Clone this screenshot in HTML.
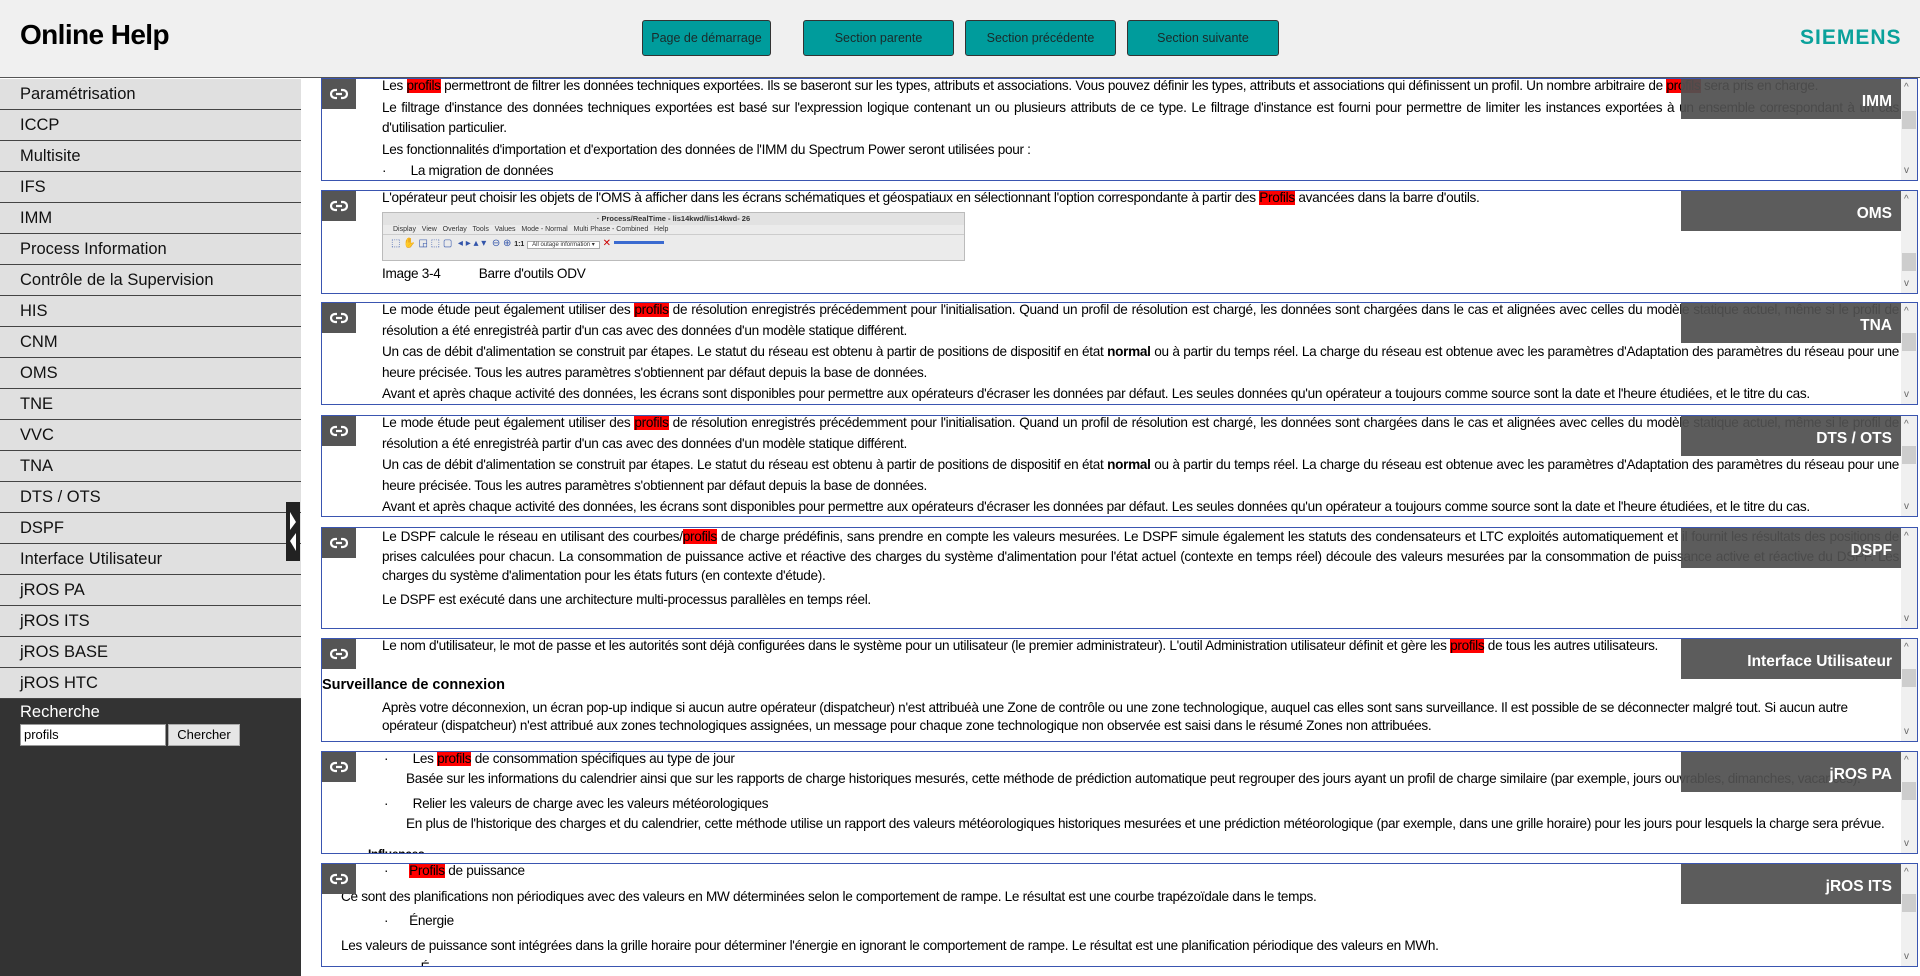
<!DOCTYPE html>
<html><head><meta charset="utf-8"><style>
*{box-sizing:border-box;margin:0;padding:0}
body{width:1920px;height:976px;overflow:hidden;background:#fff;font-family:"Liberation Sans",Arial,sans-serif;position:relative;color:#000}
#hdr{position:absolute;left:0;top:0;width:1920px;height:78px;background:#f0f0f0;border-bottom:1px solid #555}
#hdr h1{position:absolute;left:20px;top:19px;font-size:28px;font-weight:bold;letter-spacing:-0.6px}
.btn{position:absolute;top:20px;height:36px;background:#009c9c;border:1px solid #333;border-radius:3px;color:#1a2a2a;font-size:12.5px;text-align:center;line-height:34px}
#logo{position:absolute;left:1800px;top:26px;font-size:21px;font-weight:bold;color:#0aa19b;letter-spacing:1px}
#side{position:absolute;left:0;top:79px;width:301px;height:897px;background:#333}
.it{height:31px;background:#e0e0e0;border-bottom:1px solid #444;font-size:16.5px;line-height:30px;padding-left:20px;color:#111}
#srch{position:absolute;left:20px;top:624px;color:#fff;font-size:16.5px}
#inp{position:absolute;left:20px;top:645px;width:146px;height:22px;background:#fff;border:1px solid #999;color:#000;font-size:13px;padding:2px 3px}
#go{position:absolute;left:168px;top:645px;width:72px;height:22px;background:#e6e6e6;border:1px solid #aaa;color:#000;font-size:13px;text-align:center;line-height:20px}
#tog{position:absolute;left:286px;top:502px;width:14px;height:59px;background:#222}
.p{position:absolute;left:321px;width:1597px;border:1px solid #3a55b0;overflow:hidden;background:#fff}
.lk{position:absolute;left:0;top:0;width:34px;height:30px;background:#555}
.lk svg{position:absolute;left:8px;top:9px}
.tt{position:absolute;right:16px;top:0;width:220px;height:40px;background:rgba(80,80,80,.93);color:#fff;font-weight:bold;font-size:15.5px;text-align:right;padding:14px 9px 0 0}
.sb{position:absolute;right:0;top:0;width:16px;height:100%;background:#f0f0f0}
.sb .th{position:absolute;left:1px;top:32px;width:14px;height:18px;background:#cdcdcd}
.sb .u,.sb .d{position:absolute;left:3px;font-size:10px;color:#666;line-height:10px}
.sb .u{top:4px}.sb .d{bottom:4px}
.tx{position:absolute;left:60px;right:18px;top:-3px;font-size:13.6px;letter-spacing:-0.3px;line-height:20.5px;text-align:justify}
.tx p{margin:0 0 1px 0}
.h{background:#f00}
</style></head><body>
<div id="hdr"><h1>Online Help</h1>
<div class="btn" style="left:642px;width:129px">Page de démarrage</div>
<div class="btn" style="left:803px;width:151px">Section parente</div>
<div class="btn" style="left:965px;width:151px">Section précédente</div>
<div class="btn" style="left:1127px;width:152px">Section suivante</div>
<div id="logo">SIEMENS</div></div>
<div id="side">
<div class="it">Paramétrisation</div><div class="it">ICCP</div><div class="it">Multisite</div><div class="it">IFS</div><div class="it">IMM</div><div class="it">Process Information</div><div class="it">Contrôle de la Supervision</div><div class="it">HIS</div><div class="it">CNM</div><div class="it">OMS</div><div class="it">TNE</div><div class="it">VVC</div><div class="it">TNA</div><div class="it">DTS / OTS</div><div class="it">DSPF</div><div class="it">Interface Utilisateur</div><div class="it">jROS PA</div><div class="it">jROS ITS</div><div class="it">jROS BASE</div><div class="it">jROS HTC</div>
<div id="srch">Recherche</div><div id="inp">profils</div><div id="go">Chercher</div>
</div>
<div id="tog"><svg width="14" height="59"><polygon points="4,10 10,20 4,28" fill="#fff"/><polygon points="10,31 4,39 10,49" fill="#fff"/></svg></div>

<div class="p" style="top:78px;height:103px">
<div class="tx"><p>Les <span class="h">profils</span> permettront de filtrer les données techniques exportées. Ils se baseront sur les types, attributs et associations. Vous pouvez définir les types, attributs et associations qui définissent un profil. Un nombre arbitraire de <span class="h">profils</span> sera pris en charge.</p>
<p>Le filtrage d'instance des données techniques exportées est basé sur l'expression logique contenant un ou plusieurs attributs de ce type. Le filtrage d'instance est fourni pour permettre de limiter les instances exportées à un ensemble correspondant à un cas d'utilisation particulier.</p>
<p>Les fonctionnalités d'importation et d'exportation des données de l'IMM du Spectrum Power seront utilisées pour :</p>
<p>·&nbsp;&nbsp;&nbsp;&nbsp;&nbsp;&nbsp;&nbsp;La migration de données</p></div>
<div class="lk"><svg width="18" height="12"><path d="M7 2H5a4 4 0 0 0 0 8h2M11 2h2a4 4 0 0 1 0 8h-2M6 6h6" stroke="#fff" stroke-width="2.2" fill="none"/></svg></div>
<div class="tt">IMM</div><div class="sb"><span class="u">^</span><div class="th"></div><span class="d">v</span></div></div>

<div class="p" style="top:190px;height:104px">
<div class="tx"><p>L'opérateur peut choisir les objets de l'OMS à afficher dans les écrans schématiques et géospatiaux en sélectionnant l'option correspondante à partir des <span class="h">Profils</span> avancées dans la barre d'outils.</p>
<div style="width:583px;height:49px;margin-top:3px;background:#ebebeb;border:1px solid #bbb;position:relative;font-size:7px;color:#333;letter-spacing:0">
<div style="height:12px;background:#e2e2e2;text-align:center;font-weight:bold;font-size:7.5px;line-height:12px">· Process/RealTime - lis14kwd/lis14kwd- 26</div>
<div style="height:10px;line-height:10px;padding-left:10px;border-bottom:1px solid #ccc">Display &nbsp; View &nbsp; Overlay &nbsp; Tools &nbsp; Values &nbsp; Mode - Normal &nbsp; Multi Phase - Combined &nbsp; Help</div>
<div style="height:18px;padding:3px 8px;color:#3355aa;font-size:10px;line-height:12px">⬚ ✋ ◲ ⬚ ▢ &nbsp;◂ ▸ ▴ ▾ &nbsp;⊖ ⊕ <b style="color:#222;font-size:7px">1:1</b> <span style="border:1px solid #aaa;background:#fff;color:#333;font-size:6px;padding:0 4px">All outage information ▾</span> <span style="color:#c00">✕</span> <span style="display:inline-block;width:50px;height:3px;background:#3a6ad0;vertical-align:middle"></span></div></div>
<p style="margin-top:3px">Image 3-4&nbsp;&nbsp;&nbsp;&nbsp;&nbsp;&nbsp;&nbsp;&nbsp;&nbsp;&nbsp; Barre d'outils ODV</p></div>
<div class="lk"><svg width="18" height="12"><path d="M7 2H5a4 4 0 0 0 0 8h2M11 2h2a4 4 0 0 1 0 8h-2M6 6h6" stroke="#fff" stroke-width="2.2" fill="none"/></svg></div>
<div class="tt">OMS</div><div class="sb"><span class="u">^</span><div class="th" style="top:62px"></div><span class="d">v</span></div></div>

<div class="p" style="top:302px;height:103px">
<div class="tx"><p>Le mode étude peut également utiliser des <span class="h">profils</span> de résolution enregistrés précédemment pour l'initialisation. Quand un profil de résolution est chargé, les données sont chargées dans le cas et alignées avec celles du modèle statique actuel, même si le profil de résolution a été enregistréà partir d'un cas avec des données d'un modèle statique différent.</p>
<p>Un cas de débit d'alimentation se construit par étapes. Le statut du réseau est obtenu à partir de positions de dispositif en état <b>normal</b> ou à partir du temps réel. La charge du réseau est obtenue avec les paramètres d'Adaptation des paramètres du réseau pour une heure précisée. Tous les autres paramètres s'obtiennent par défaut depuis la base de données.</p>
<p>Avant et après chaque activité des données, les écrans sont disponibles pour permettre aux opérateurs d'écraser les données par défaut. Les seules données qu'un opérateur a toujours comme source sont la date et l'heure étudiées, et le titre du cas.</p></div>
<div class="lk"><svg width="18" height="12"><path d="M7 2H5a4 4 0 0 0 0 8h2M11 2h2a4 4 0 0 1 0 8h-2M6 6h6" stroke="#fff" stroke-width="2.2" fill="none"/></svg></div>
<div class="tt">TNA</div><div class="sb"><span class="u">^</span><div class="th" style="top:30px"></div><span class="d">v</span></div></div>

<div class="p" style="top:415px;height:102px">
<div class="tx"><p>Le mode étude peut également utiliser des <span class="h">profils</span> de résolution enregistrés précédemment pour l'initialisation. Quand un profil de résolution est chargé, les données sont chargées dans le cas et alignées avec celles du modèle statique actuel, même si le profil de résolution a été enregistréà partir d'un cas avec des données d'un modèle statique différent.</p>
<p>Un cas de débit d'alimentation se construit par étapes. Le statut du réseau est obtenu à partir de positions de dispositif en état <b>normal</b> ou à partir du temps réel. La charge du réseau est obtenue avec les paramètres d'Adaptation des paramètres du réseau pour une heure précisée. Tous les autres paramètres s'obtiennent par défaut depuis la base de données.</p>
<p>Avant et après chaque activité des données, les écrans sont disponibles pour permettre aux opérateurs d'écraser les données par défaut. Les seules données qu'un opérateur a toujours comme source sont la date et l'heure étudiées, et le titre du cas.</p></div>
<div class="lk"><svg width="18" height="12"><path d="M7 2H5a4 4 0 0 0 0 8h2M11 2h2a4 4 0 0 1 0 8h-2M6 6h6" stroke="#fff" stroke-width="2.2" fill="none"/></svg></div>
<div class="tt">DTS / OTS</div><div class="sb"><span class="u">^</span><div class="th" style="top:30px"></div><span class="d">v</span></div></div>

<div class="p" style="top:527px;height:102px">
<div class="tx" style="top:-1px;line-height:19.5px"><p>Le DSPF calcule le réseau en utilisant des courbes/<span class="h">profils</span> de charge prédéfinis, sans prendre en compte les valeurs mesurées. Le DSPF simule également les statuts des condensateurs et LTC exploités automatiquement et il fournit les résultats des positions de prises calculées pour chacun. La consommation de puissance active et réactive des charges du système d'alimentation pour l'état actuel (contexte en temps réel) découle des valeurs mesurées par la consommation de puissance active et réactive du DSPF. Les charges du système d'alimentation pour les états futurs (en contexte d'étude).</p>
<p style="margin-top:4px">Le DSPF est exécuté dans une architecture multi-processus parallèles en temps réel.</p></div>
<div class="lk"><svg width="18" height="12"><path d="M7 2H5a4 4 0 0 0 0 8h2M11 2h2a4 4 0 0 1 0 8h-2M6 6h6" stroke="#fff" stroke-width="2.2" fill="none"/></svg></div>
<div class="tt">DSPF</div><div class="sb"><span class="u">^</span><span class="d">v</span></div></div>

<div class="p" style="top:638px;height:104px">
<div class="tx" style="left:0"><p style="padding-left:60px">Le nom d'utilisateur, le mot de passe et les autorités sont déjà configurées dans le système pour un utilisateur (le premier administrateur). L'outil Administration utilisateur définit et gère les <span class="h">profils</span> de tous les autres utilisateurs.</p>
<p style="font-weight:bold;margin-top:18px;font-size:14.5px;letter-spacing:0">Surveillance de connexion</p>
<p style="padding-left:60px;margin-top:4px;line-height:18px;text-align:left">Après votre déconnexion, un écran pop-up indique si aucun autre opérateur (dispatcheur) n'est attribuéà une Zone de contrôle ou une zone technologique, auquel cas elles sont sans surveillance. Il est possible de se déconnecter malgré tout. Si aucun autre opérateur (dispatcheur) n'est attribué aux zones technologiques assignées, un message pour chaque zone technologique non observée est saisi dans le résumé Zones non attribuées.</p></div>
<div class="lk" style="top:0"><svg width="18" height="12"><path d="M7 2H5a4 4 0 0 0 0 8h2M11 2h2a4 4 0 0 1 0 8h-2M6 6h6" stroke="#fff" stroke-width="2.2" fill="none"/></svg></div>
<div class="tt">Interface Utilisateur</div><div class="sb"><span class="u">^</span><div class="th" style="top:30px"></div><span class="d">v</span></div></div>

<div class="p" style="top:751px;height:103px">
<div class="tx" style="left:0;text-align:left;line-height:19px">
<p style="padding-left:62px">·&nbsp;&nbsp;&nbsp;&nbsp;&nbsp;&nbsp;&nbsp;Les <span class="h">profils</span> de consommation spécifiques au type de jour</p>
<p style="padding-left:84px">Basée sur les informations du calendrier ainsi que sur les rapports de charge historiques mesurés, cette méthode de prédiction automatique peut regrouper des jours ayant un profil de charge similaire (par exemple, jours ouvrables, dimanches, vacances).</p>
<p style="padding-left:62px;margin-top:6px">·&nbsp;&nbsp;&nbsp;&nbsp;&nbsp;&nbsp;&nbsp;Relier les valeurs de charge avec les valeurs météorologiques</p>
<p style="padding-left:84px">En plus de l'historique des charges et du calendrier, cette méthode utilise un rapport des valeurs météorologiques historiques mesurées et une prédiction météorologique (par exemple, dans une grille horaire) pour les jours pour lesquels la charge sera prévue.</p>
<p style="padding-left:46px;margin-top:12px;font-weight:bold;font-size:12px">Influences</p></div>
<div class="lk"><svg width="18" height="12"><path d="M7 2H5a4 4 0 0 0 0 8h2M11 2h2a4 4 0 0 1 0 8h-2M6 6h6" stroke="#fff" stroke-width="2.2" fill="none"/></svg></div>
<div class="tt">jROS PA</div><div class="sb"><span class="u">^</span><div class="th" style="top:30px"></div><span class="d">v</span></div></div>

<div class="p" style="top:863px;height:104px">
<div class="tx" style="left:0;text-align:left;top:-3px">
<p style="padding-left:62px">·&nbsp;&nbsp;&nbsp;&nbsp;&nbsp;&nbsp;<span class="h">Profils</span> de puissance</p>
<p style="padding-left:19px;margin-top:5px">Ce sont des planifications non périodiques avec des valeurs en MW déterminées selon le comportement de rampe. Le résultat est une courbe trapézoïdale dans le temps.</p>
<p style="padding-left:62px;margin-top:4px">·&nbsp;&nbsp;&nbsp;&nbsp;&nbsp;&nbsp;Énergie</p>
<p style="padding-left:19px;margin-top:4px">Les valeurs de puissance sont intégrées dans la grille horaire pour déterminer l'énergie en ignorant le comportement de rampe. Le résultat est une planification périodique des valeurs en MWh.</p>
<p style="padding-left:84px;margin-top:2px">·&nbsp;&nbsp;&nbsp;É</p></div>
<div class="lk"><svg width="18" height="12"><path d="M7 2H5a4 4 0 0 0 0 8h2M11 2h2a4 4 0 0 1 0 8h-2M6 6h6" stroke="#fff" stroke-width="2.2" fill="none"/></svg></div>
<div class="tt">jROS ITS</div><div class="sb"><span class="u">^</span><div class="th" style="top:30px"></div><span class="d">v</span></div></div>
</body></html>
